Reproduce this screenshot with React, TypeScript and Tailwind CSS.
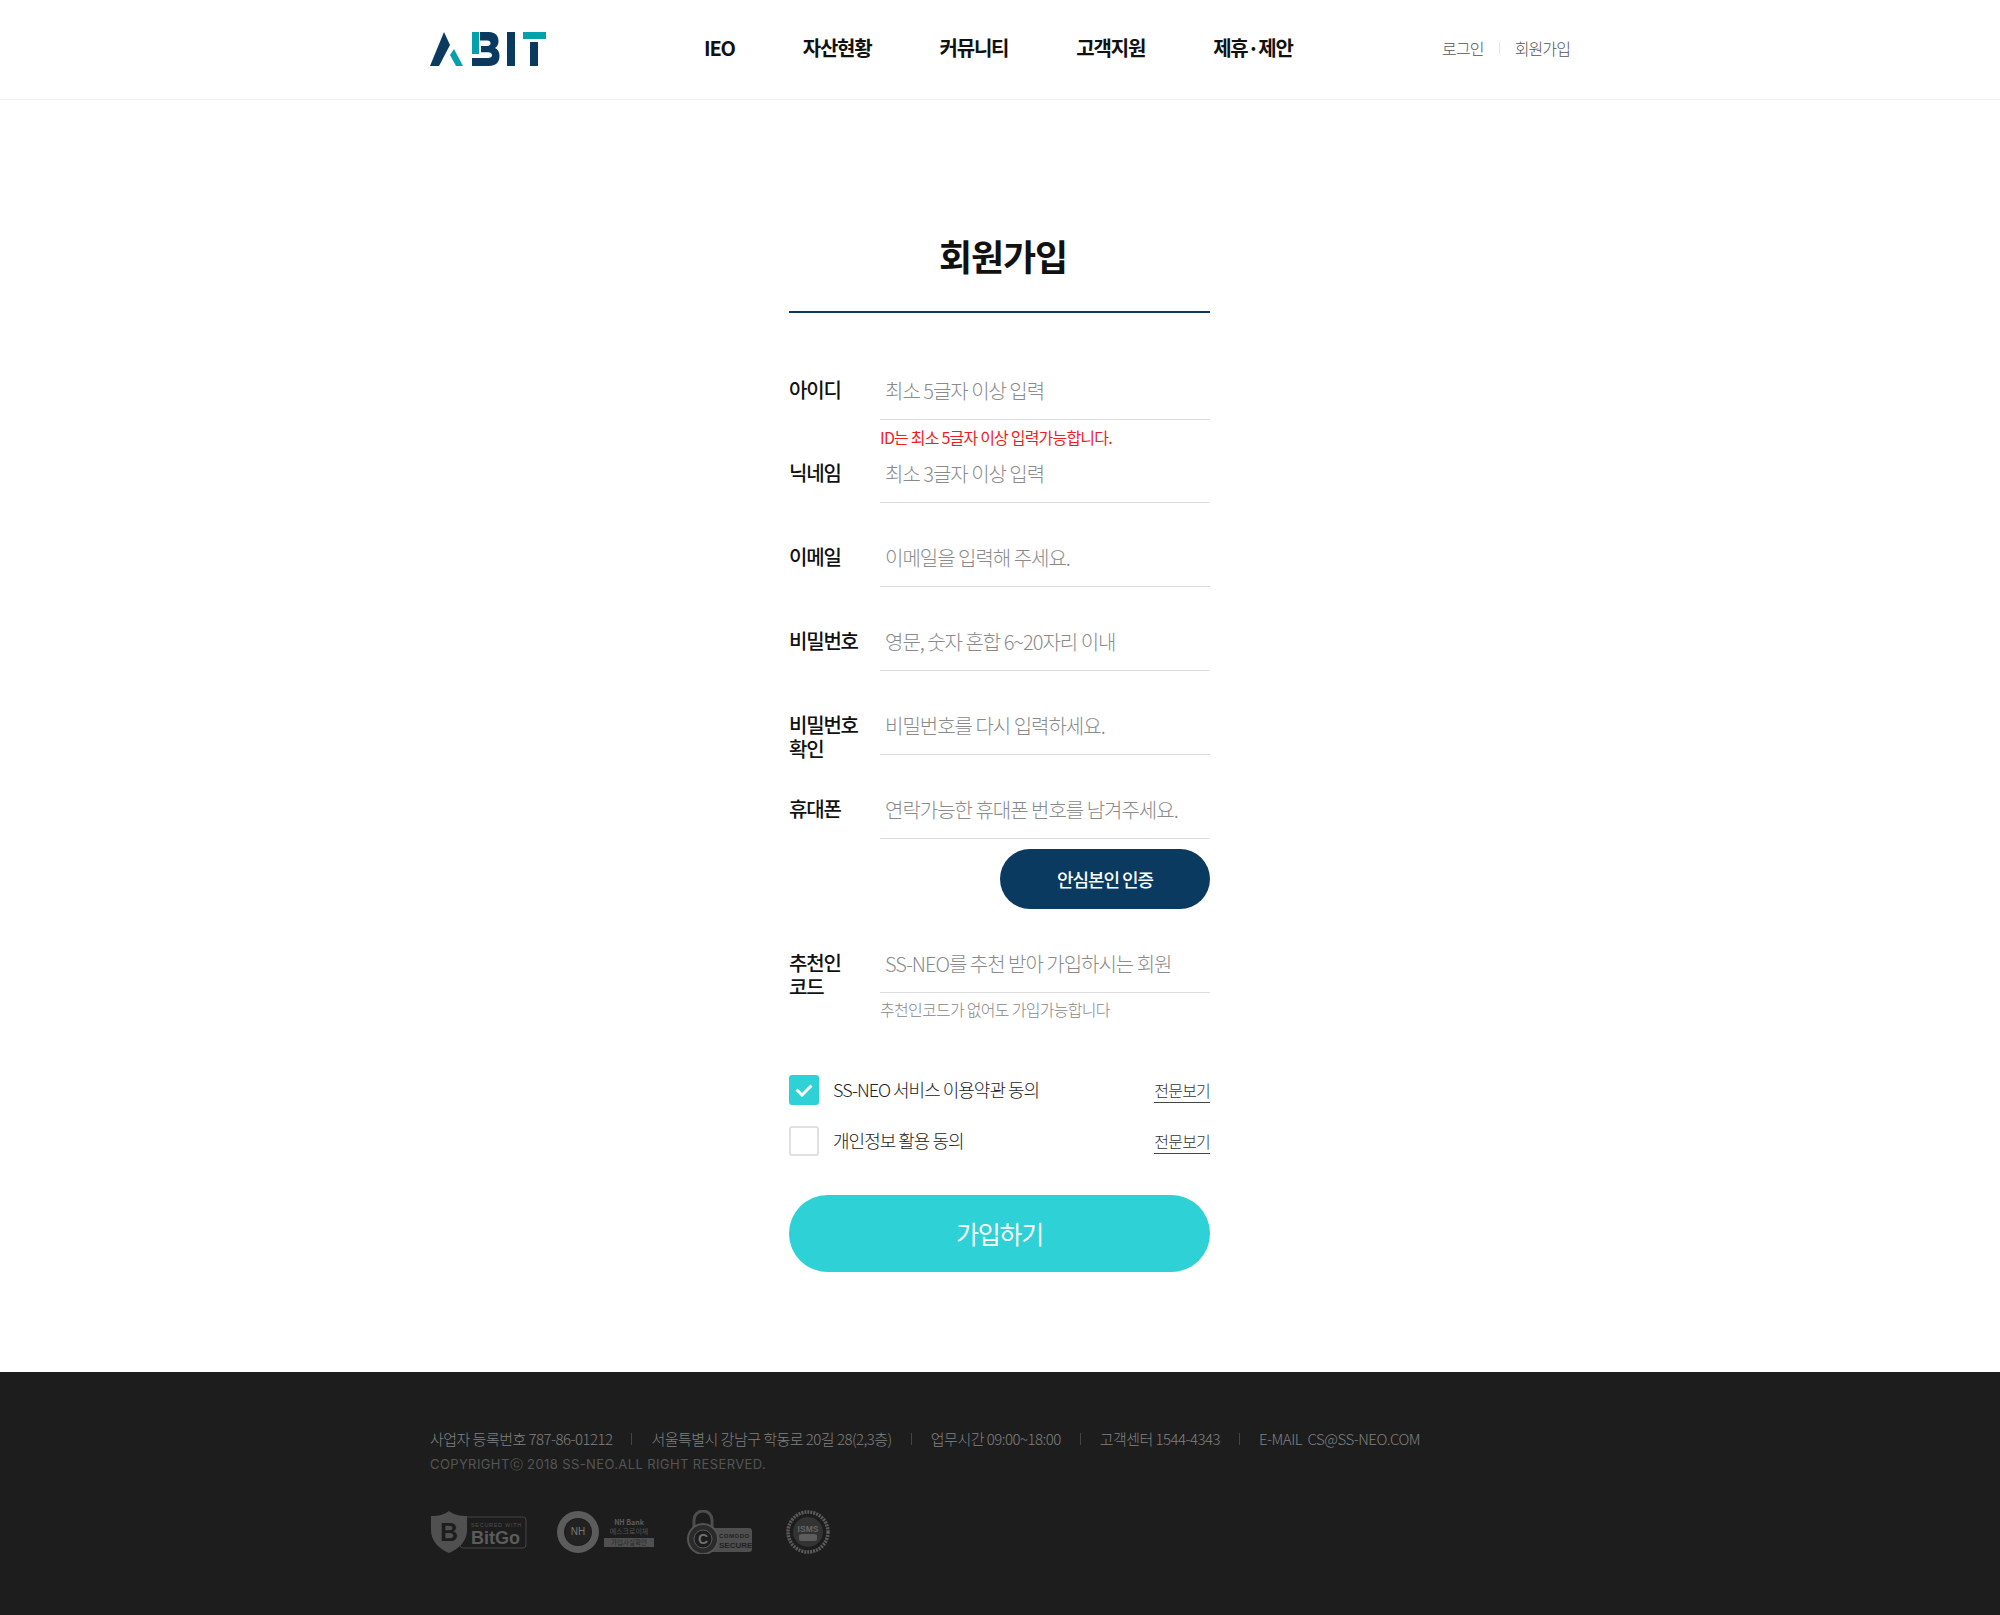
const sans = "font-['Noto_Sans_CJK_KR','Liberation_Sans',sans-serif]";

function Logo() {
  return (
    <svg width="116" height="34" viewBox="0 0 116 34" aria-label="ABIT">
      <polygon points="0,34 14,0 20,13 9,34" fill="#0a3a60" />
      <polygon points="24,17 33,34 26,34 20,23" fill="#04a0ac" />
      <rect x="42" y="0" width="7" height="22" fill="#04a0ac" />
      <path d="M50 0h9c6 0 9.500 3.500 9.500 9 0 3-1 5.500-3.500 7 3 1.300 4.500 4 4.500 8 0 6.500-4 10-10.500 10H42v-8h16c2.600 0 4-1 4-2.800s-1.400-3-4-3h-7v-6.200h6c2.400 0 3.500-1 3.500-2.700 0-1.700-1.100-2.800-3.500-2.800H50z" fill="#0a3a60" />
      <rect x="77" y="0" width="8" height="34" fill="#0a3a60" />
      <rect x="93" y="0" width="23" height="7" fill="#04a0ac" />
      <rect x="100" y="10" width="8" height="24" fill="#0a3a60" />
    </svg>
  );
}

function Header() {
  const items = ["IEO", "자산현황", "커뮤니티", "고객지원", "제휴·제안"];
  return (
    <header className="h-[100px] border-b border-[#eeeeee]">
      <div className="mx-auto flex h-[98px] w-[1140px] items-center">
        <Logo />
        <nav className="ml-[158px] flex gap-[68px] pb-[2px]">
          {items.map((item) => (
            <a key={item} className="text-[20px] font-bold leading-[30px] tracking-[-0.06em] text-[#111111]">
              {item}
            </a>
          ))}
        </nav>
        <div className="ml-auto flex items-center pb-[2px] text-[16px] font-light tracking-[-0.055em] text-[#555555]">
          <a>로그인</a>
          <span className="mx-[15px] h-[12px] w-px bg-[#e5e5e5]" />
          <a>회원가입</a>
        </div>
      </div>
    </header>
  );
}

type FieldProps = {
  label: string[];
  placeholder: string;
  type?: string;
};

function Field({ label, placeholder, type = "text" }: FieldProps) {
  return (
    <div className="flex h-[59px] items-start">
      <label className="w-[91px] pt-[17px] text-[20px] font-medium leading-[24px] tracking-[-0.06em] text-[#111111]">
        {label.map((line) => (
          <div key={line}>{line}</div>
        ))}
      </label>
      <input
        type={type}
        placeholder={placeholder}
        className="h-[59px] min-w-0 flex-1 border-b border-[#dddddd] pl-[5px] text-[20px] font-light tracking-[-0.05em] text-[#333333] outline-none placeholder:text-[#8a8a8a]"
      />
    </div>
  );
}

function Agreement({ label, checked }: { label: string; checked?: boolean }) {
  return (
    <div className="flex h-[30px] items-center">
      {checked ? (
        <span className="flex h-[30px] w-[30px] items-center justify-center rounded-[3px] bg-[#2dd1d6]">
          <svg width="18" height="14" viewBox="0 0 18 14" fill="none">
            <path d="M1.500 6.500l5.500 5.500 9.500-9.500" stroke="#ffffff" strokeWidth="3" />
          </svg>
        </span>
      ) : (
        <span className="h-[30px] w-[30px] rounded-[3px] border-2 border-[#e0e0e0]" />
      )}
      <span className="ml-[14px] pb-[2px] text-[18px] font-light tracking-[-0.055em] text-[#222222]">{label}</span>
      <a className="ml-auto mt-[1px] border-b border-[#444444] text-[16px] font-light leading-[24px] tracking-[-0.05em] text-[#333333]">
        전문보기
      </a>
    </div>
  );
}

function SignupForm() {
  return (
    <div className="mx-auto w-[1140px]">
      <main className="ml-[359px] w-[421px] pb-[100px] pt-[129px]">
        <h1 className="border-b-2 border-[#0a3a60] pb-[30px] pl-[7px] text-center text-[36px] font-bold leading-[52px] tracking-[-0.03em] text-[#111111]">
          회원가입
        </h1>
        <form className="pt-[48px]">
          <Field label={["아이디"]} placeholder="최소 5글자 이상 입력" />
          <p className="h-[24px] pl-[91px] text-[16px] leading-[34px] tracking-[-0.05em] text-[#f01c24]">
            ID는 최소 5글자 이상 입력가능합니다.
          </p>
          <div className="flex flex-col gap-[25px]">
            <Field label={["닉네임"]} placeholder="최소 3글자 이상 입력" />
            <Field label={["이메일"]} placeholder="이메일을 입력해 주세요." type="email" />
            <Field label={["비밀번호"]} placeholder="영문, 숫자 혼합 6~20자리 이내" type="password" />
            <Field label={["비밀번호", "확인"]} placeholder="비밀번호를 다시 입력하세요." type="password" />
            <Field label={["휴대폰"]} placeholder="연락가능한 휴대폰 번호를 남겨주세요." type="tel" />
          </div>
          <div className="mt-[10px] flex justify-end">
            <button
              type="button"
              className="h-[60px] w-[210px] rounded-full bg-[#0a3a60] text-[18px] font-medium tracking-[-0.06em] text-white"
            >
              안심본인 인증
            </button>
          </div>
          <div className="mt-[25px]">
            <Field label={["추천인", "코드"]} placeholder="SS-NEO를 추천 받아 가입하시는 회원" />
          </div>
          <p className="pl-[91px] pt-[2px] text-[16px] font-light leading-[28px] tracking-[-0.045em] text-[#888888]">
            추천인코드가 없어도 가입가능합니다
          </p>
          <div className="mt-[52px] flex flex-col gap-[21px]">
            <Agreement label="SS-NEO 서비스 이용약관 동의" checked />
            <Agreement label="개인정보 활용 동의" />
          </div>
          <button
            type="button"
            className="mt-[39px] h-[77px] w-full rounded-full bg-[#2dd1d6] text-[25px] font-normal tracking-[-0.05em] text-white"
          >
            가입하기
          </button>
        </form>
      </main>
    </div>
  );
}

function BitGoBadge() {
  return (
    <svg width="97" height="44" viewBox="0 0 97 44">
      <rect x="30" y="7" width="66" height="31" rx="3" fill="none" stroke="#444444" />
      <path d="M19 1c5 4 11 5 18 5v14c0 11-8 19-18 23C9 39 1 31 1 20V6c7 0 13-1 18-5z" fill="#505050" />
      <text x="19" y="31" textAnchor="middle" fontFamily="Liberation Sans" fontWeight="700" fontSize="25" fill="#1d1d1d">B</text>
      <text x="41" y="17" fontFamily="Liberation Sans" fontSize="5.500" letterSpacing="0.7" fill="#505050">SECURED WITH</text>
      <text x="41" y="34" fontFamily="Liberation Sans" fontWeight="700" fontSize="18" fill="#5c5c5c">BitGo</text>
    </svg>
  );
}

function NhBadge() {
  return (
    <svg width="98" height="44" viewBox="0 0 98 44">
      <circle cx="21" cy="22" r="17.500" fill="none" stroke="#5c5c5c" strokeWidth="7" />
      <circle cx="21" cy="22" r="13" fill="#222222" />
      <text x="21" y="25" textAnchor="middle" fontFamily="Liberation Sans" fontSize="10" fill="#777777">NH</text>
      <text x="72" y="15" textAnchor="middle" fontFamily="Noto Sans CJK KR" fontSize="7" fontWeight="700" fill="#5e5e5e">NH Bank</text>
      <text x="72" y="24" textAnchor="middle" fontFamily="Noto Sans CJK KR" fontSize="7" fill="#555555">에스크로이체</text>
      <rect x="47" y="28" width="50" height="9" fill="#505050" />
      <text x="72" y="35" textAnchor="middle" fontFamily="Noto Sans CJK KR" fontSize="6.500" fill="#2a2a2a">가입사실확인</text>
    </svg>
  );
}

function ComodoBadge() {
  return (
    <svg width="68" height="44" viewBox="0 0 68 44">
      <path d="M9 22V10a9 9 0 0 1 18 0v12" fill="none" stroke="#4d4d4d" strokeWidth="3" />
      <rect x="20" y="18" width="47" height="24" rx="3" fill="#4f4f4f" />
      <circle cx="18" cy="29" r="15" fill="#2a2a2a" stroke="#555555" strokeWidth="2" />
      <circle cx="18" cy="29" r="9" fill="#1d1d1d" stroke="#5c5c5c" />
      <text x="18" y="34" textAnchor="middle" fontFamily="Liberation Sans" fontWeight="700" fontSize="14" fill="#707070">C</text>
      <text x="34" y="28" fontFamily="Liberation Sans" fontWeight="700" fontSize="6" letterSpacing="0.5" fill="#222222">COMODO</text>
      <text x="34" y="38" fontFamily="Liberation Sans" fontWeight="700" fontSize="8" fill="#222222">SECURE</text>
    </svg>
  );
}

function IsmsBadge() {
  return (
    <svg width="44" height="44" viewBox="0 0 44 44">
      <circle cx="22" cy="22" r="20" fill="none" stroke="#5c5c5c" strokeWidth="3.500" strokeDasharray="2 1" />
      <circle cx="22" cy="22" r="15" fill="#333333" />
      <rect x="13" y="24" width="18" height="7" rx="2" fill="#5c5c5c" />
      <text x="22" y="22" textAnchor="middle" fontFamily="Liberation Sans" fontWeight="700" fontSize="8.500" fill="#666666">ISMS</text>
    </svg>
  );
}

function Footer() {
  const infos = [
    "사업자 등록번호 787-86-01212",
    "서울특별시 강남구 학동로 20길 28(2,3층)",
    "업무시간 09:00~18:00",
    "고객센터 1544-4343",
    "E-MAIL  CS@SS-NEO.COM",
  ];
  return (
    <footer className="h-[243px] bg-[#1d1d1d] pt-[54px]">
      <div className="mx-auto w-[1140px]">
        <ul className="flex items-center text-[15px] font-light leading-[26px] tracking-[-0.035em] text-[#808080]">
          {infos.map((info, i) => (
            <li key={info} className="flex items-center whitespace-pre">
              {i > 0 && <span className="mx-[19px] h-[12px] w-px bg-[#444444]" />}
              {info}
            </li>
          ))}
        </ul>
        <p className="font-['Inter',sans-serif] text-[13px] leading-[24px] tracking-[0.03em] text-[#555555]">
          COPYRIGHTⓒ 2018 SS-NEO.ALL RIGHT RESERVED.
        </p>
        <div className="mt-[34px] flex items-center">
          <BitGoBadge />
          <div className="ml-[30px]"><NhBadge /></div>
          <div className="ml-[30px]"><ComodoBadge /></div>
          <div className="ml-[33px]"><IsmsBadge /></div>
        </div>
      </div>
    </footer>
  );
}

export default function App() {
  return (
    <div className={`${sans} min-h-screen bg-white`}>
      <Header />
      <SignupForm />
      <Footer />
    </div>
  );
}
